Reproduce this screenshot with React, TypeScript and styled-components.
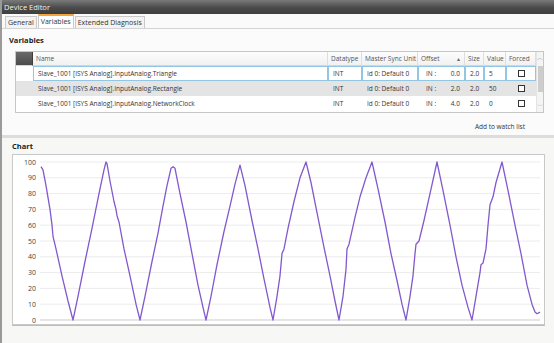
import styled, { createGlobalStyle, css } from "styled-components";

const GlobalStyle = createGlobalStyle`
  html, body {
    margin: 0;
    padding: 0;
    background: #f0efeb;
    font-family: "Open Sans", "Noto Sans", sans-serif;
  }
`;

// Window frame
const Window = styled.div`
  width: 554px;
  height: 343px;
  box-sizing: border-box;
  border-left: 2px solid #9a9a9a;
  display: flex;
  flex-direction: column;
  background: #f0efeb;
  overflow: hidden;
`;

const TitleBar = styled.div`
  height: 14px;
  flex-shrink: 0;
  background: linear-gradient(#7a7a7a, #4a4a4a 55%, #3e3e3e);
  color: #f4f4f4;
  font-size: 7.5px;
  line-height: 14px;
  padding-left: 2px;
`;

// Tabs
const TabStrip = styled.div`
  height: 14px;
  flex-shrink: 0;
  display: flex;
  align-items: flex-end;
  padding-left: 3px;
  background: #fafafa;
  border-bottom: 1px solid #d4d4d4;
`;

const Tab = styled.div<{ $active?: boolean }>`
  height: 12px;
  box-sizing: border-box;
  padding: 0 2px;
  margin-right: 1px;
  font-size: 7px;
  line-height: 11px;
  color: #333;
  border: 1px solid #c9c9c9;
  border-bottom: none;
  background: #f3f3f3;
  ${(p) =>
    p.$active &&
    css`
      height: 14px;
      line-height: 12px;
      background: #fff;
      border-top: 2px solid #f0a63a;
    `}
`;

// Upper section
const Section = styled.div`
  background: #fbfbfb;
  padding: 5px 10px 0 7px;
  height: 109px;
  flex-shrink: 0;
  box-sizing: border-box;
  border-bottom: 3px solid #dddcd8;
`;

const Heading = styled.div`
  font-size: 7.5px;
  font-weight: bold;
  color: #222;
  height: 12px;
  line-height: 12px;
`;

const Table = styled.div`
  margin: 5px 0 0 6px;
  width: 529px;
  height: 62px;
  box-sizing: border-box;
  border: 1px solid #c6c6c6;
  background: #fff;
  display: flex;
`;

const Grid = styled.div`
  display: grid;
  grid-template-columns: 17px 295px 34px 56px 47px 19px 22px 30px;
  grid-auto-rows: 15px;
  grid-template-rows: 14px;
  align-content: start;
`;

const HeadCell = styled.div<{ $corner?: boolean }>`
  font-size: 6.5px;
  color: #555;
  line-height: 14px;
  padding-left: 3px;
  border-right: 1px solid #dedede;
  border-bottom: 1px solid #d6d6d6;
  background: linear-gradient(#fdfdfd, #f1f1f1);
  display: flex;
  justify-content: space-between;
  padding-right: 3px;
  white-space: nowrap;
  overflow: hidden;
  ${(p) =>
    p.$corner &&
    css`
      background: linear-gradient(#6a6a6a, #4c4c4c);
      border-right: 1px solid #3e3e3e;
    `}
`;

const SortArrow = styled.span`
  font-size: 5px;
  color: #666;
`;

const Cell = styled.div<{ $shade?: boolean; $focus?: boolean }>`
  font-size: 6.5px;
  color: #333;
  padding-left: 4px;
  box-sizing: border-box;
  white-space: nowrap;
  overflow: hidden;
  background: ${(p) => (p.$shade ? "#e4e4e4" : "#fff")};
  border: 1px solid ${(p) => (p.$focus ? "#93c6e2" : "transparent")};
  line-height: 13px;
`;

const OffsetCell = styled(Cell)`
  display: flex;
  justify-content: space-between;
  padding-right: 4px;
  padding-left: 7px;
`;

const CheckCell = styled(Cell)`
  display: flex;
  align-items: center;
  justify-content: center;
  padding-left: 0;
`;

const CheckBox = styled.span`
  width: 7px;
  height: 7px;
  box-sizing: border-box;
  border: 1.3px solid #333;
  background: #fff;
`;

const ScrollBar = styled.div`
  width: 9px;
  display: flex;
  flex-direction: column;
  background: #f4f4f4;
  border-left: 1px solid #e4e4e4;
`;

const ScrollBtn = styled.div`
  height: 12px;
  font-size: 6px;
  color: #999;
  display: flex;
  align-items: center;
  justify-content: center;
`;

const ScrollThumb = styled.div`
  height: 26px;
  background: #cdcdcd;
  margin: 2px 0 0 1px;
`;

const ScrollSpace = styled.div`
  flex: 1;
`;

const Footer = styled.div`
  display: flex;
  justify-content: flex-end;
  padding: 9px 19px 0 0;
  font-size: 6.5px;
  color: #333;
`;

// Chart section
const ChartSection = styled.div`
  flex: 1;
  padding: 2px 9px 0 10px;
  background: #f7f7f5;
`;

const ChartBox = styled.div`
  margin-top: 2px;
  width: 533px;
  height: 171px;
  box-sizing: border-box;
  border: 1px solid #c9c9c9;
  background: #fff;
  box-shadow: 0 1px 0 #bdbdbd;
`;

const rows = [
  { name: "Slave_1001 [ISYS Analog].InputAnalog.Triangle", off: "0.0", val: "5" },
  { name: "Slave_1001 [ISYS Analog].InputAnalog.Rectangle", off: "2.0", val: "50" },
  { name: "Slave_1001 [ISYS Analog].InputAnalog.NetworkClock", off: "4.0", val: "0" },
];

const wave: [number, number][] = [
  [41, 97], [43, 95], [46, 85], [50, 70], [52, 60], [53, 53], [56, 45], [62, 28], [68, 12], [73, 0],
  [78, 15], [85, 37], [92, 58], [99, 80], [104, 95], [106, 100], [107, 99], [110, 88], [114, 75],
  [116, 70], [117, 66], [119, 62], [124, 45], [130, 28], [136, 10], [140, 0], [145, 15], [152, 37],
  [158, 55], [163, 72], [167, 85], [171, 96], [173, 97], [175, 96], [180, 80], [186, 62], [192, 42],
  [198, 22], [203, 8], [206, 0], [211, 15], [217, 35], [224, 56], [230, 72], [235, 86], [240, 98],
  [245, 85], [252, 63], [258, 45], [264, 26], [270, 8], [273, 0], [277, 15], [280, 28], [282, 42],
  [284, 45], [288, 58], [294, 75], [300, 90], [306, 100], [311, 87], [317, 68], [324, 46], [330, 28],
  [335, 12], [339, 0], [343, 15], [346, 32], [347, 45], [349, 48], [355, 65], [360, 78], [366, 90],
  [372, 100], [378, 83], [385, 62], [391, 42], [397, 25], [402, 10], [406, 0], [410, 15], [413, 28],
  [415, 42], [416, 48], [419, 50], [424, 63], [430, 80], [437, 100], [443, 82], [450, 60], [456, 40],
  [462, 22], [468, 8], [472, 0], [476, 15], [480, 30], [481, 35], [483, 36], [486, 45], [488, 60],
  [490, 73], [493, 78], [496, 87], [502, 100], [508, 82], [515, 60], [521, 42], [527, 22], [532, 10],
  [535, 5], [537, 4], [540, 5],
];

const yOf = (v: number) => 321 - v * 1.58;

const Chart = () => {
  const ticks = [0, 10, 20, 30, 40, 50, 60, 70, 80, 90, 100];
  const pts = wave.map(([x, v]) => `${x},${yOf(v).toFixed(1)}`).join(" ");
  return (
    <svg width="531" height="169" viewBox="13 156 531 169" style={{ display: "block" }}>
      {ticks.map((t) => (
        <g key={t}>
          <line x1={40} x2={540} y1={yOf(t)} y2={yOf(t)} stroke={t === 0 ? "#dcdcdc" : "#ececec"} strokeWidth={t === 0 ? 1.5 : 1} />
          <text
            x={36}
            y={yOf(t) + 2.5}
            textAnchor="end"
            fontSize="7"
            fill="#444"
            fontFamily="'Open Sans', sans-serif"
          >
            {t}
          </text>
        </g>
      ))}
      <polyline points={pts} fill="none" stroke="#8258cf" strokeWidth={1.3} strokeLinejoin="round" />
    </svg>
  );
};

export default function App() {
  return (
    <>
      <GlobalStyle />
      <Window>
        <TitleBar>Device Editor</TitleBar>
        <TabStrip>
          <Tab>General</Tab>
          <Tab $active>Variables</Tab>
          <Tab>Extended Diagnosis</Tab>
        </TabStrip>
        <Section>
          <Heading>Variables</Heading>
          <Table>
            <Grid>
              <HeadCell $corner />
              <HeadCell>Name</HeadCell>
              <HeadCell>Datatype</HeadCell>
              <HeadCell>Master Sync Unit</HeadCell>
              <HeadCell>
                Offset <SortArrow>▲</SortArrow>
              </HeadCell>
              <HeadCell>Size</HeadCell>
              <HeadCell>Value</HeadCell>
              <HeadCell>Forced</HeadCell>
              {rows.map((r, i) => {
                const shade = i === 1;
                const focus = i === 0;
                return [
                  <Cell key={`h${i}`} $shade={shade} />,
                  <Cell key={`n${i}`} $shade={shade} $focus={focus}>{r.name}</Cell>,
                  <Cell key={`d${i}`} $shade={shade} $focus={focus}>INT</Cell>,
                  <Cell key={`m${i}`} $shade={shade} $focus={focus}>Id 0: Default 0</Cell>,
                  <OffsetCell key={`o${i}`} $shade={shade} $focus={focus}>
                    <span>IN :</span>
                    <span>{r.off}</span>
                  </OffsetCell>,
                  <Cell key={`s${i}`} $shade={shade} $focus={focus}>2.0</Cell>,
                  <Cell key={`v${i}`} $shade={shade} $focus={focus}>{r.val}</Cell>,
                  <CheckCell key={`f${i}`} $shade={shade} $focus={focus}>
                    <CheckBox />
                  </CheckCell>,
                ];
              })}
            </Grid>
            <ScrollBar>
              <ScrollBtn>︿</ScrollBtn>
              <ScrollThumb />
              <ScrollSpace />
              <ScrollBtn>﹀</ScrollBtn>
            </ScrollBar>
          </Table>
          <Footer>Add to watch list</Footer>
        </Section>
        <ChartSection>
          <Heading>Chart</Heading>
          <ChartBox>
            <Chart />
          </ChartBox>
        </ChartSection>
      </Window>
    </>
  );
}
